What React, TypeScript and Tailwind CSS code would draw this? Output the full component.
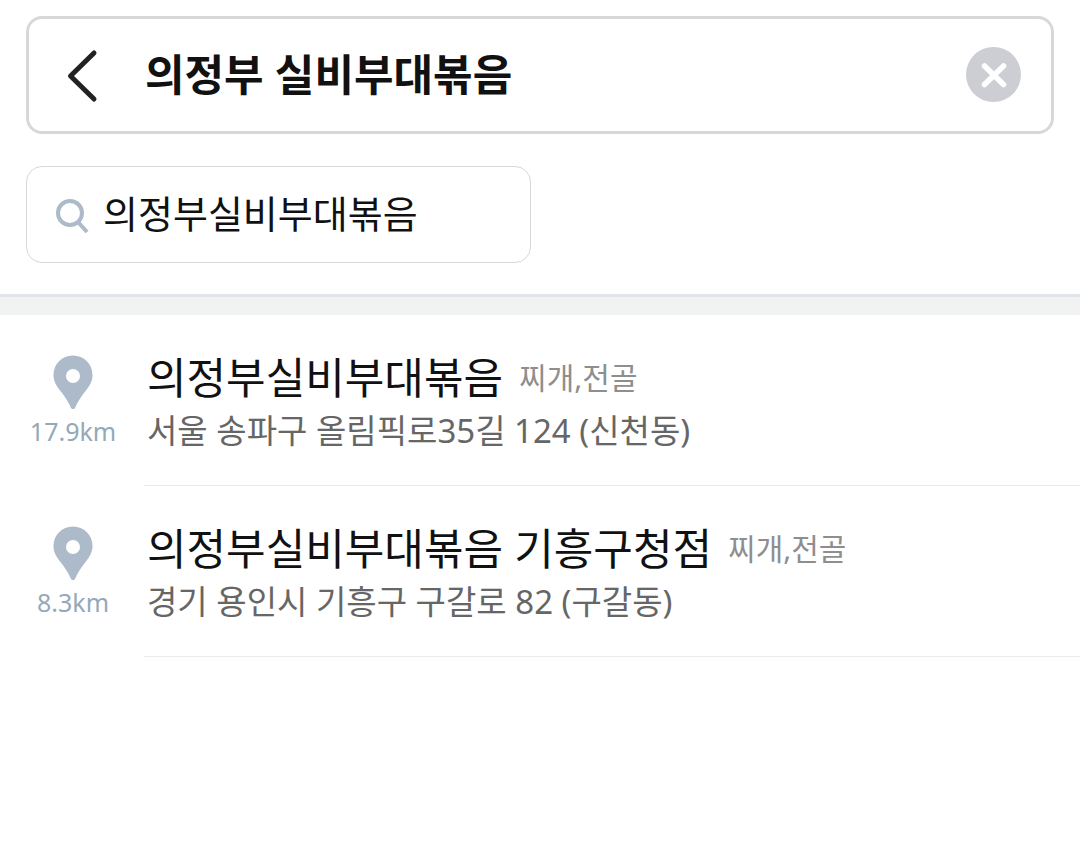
interface Place {
  name: string;
  category: string;
  address: string;
  distance: string;
}

const places: Place[] = [
  { name: "의정부실비부대볶음", category: "찌개,전골", address: "서울 송파구 올림픽로35길 124 (신천동)", distance: "17.9km" },
  { name: "의정부실비부대볶음 기흥구청점", category: "찌개,전골", address: "경기 용인시 기흥구 구갈로 82 (구갈동)", distance: "8.3km" },
];

function PinIcon() {
  return (
    <svg width="40" height="54" viewBox="0 0 40 54" aria-hidden="true">
      <path
        fill="#adbac9"
        fillRule="evenodd"
        d="M20 .5C9 .5 .5 9 .5 20c0 6.500 3 11 7 16 5 6.500 8 11 10.500 17q2 2.500 4 0c2.500-6 5.500-10.500 10.500-17 4-5 7-9.500 7-16C39.500 9 31 .5 20 .5Zm0 13.500a7 7 0 1 1 0 14a7 7 0 0 1 0-14Z"
      />
    </svg>
  );
}

function PlaceRow({ place }: { place: Place }) {
  return (
    <li className="flex">
      <div className="flex w-36 shrink-0 flex-col items-center pt-10 pl-0.5">
        <PinIcon />
        <span className="mt-1 text-[25px] leading-9 text-[#94a8b8]">{place.distance}</span>
      </div>
      <a href="#place" className="block min-w-0 flex-1 border-b border-[#ebebeb] pt-[37px] pb-[27px] pl-[3px]">
        <span className="flex items-center gap-4">
          <span className="text-[43px] leading-[52px] text-[#111]">{place.name}</span>
          <span className="text-[30px] leading-10 text-[#8e8e8e]">{place.category}</span>
        </span>
        <span className="block text-[33px] leading-[54px] text-[#666]">{place.address}</span>
      </a>
    </li>
  );
}

export default function App() {
  return (
    <main className="min-h-screen bg-white font-['Noto_Sans','Noto_Sans_CJK_KR',sans-serif]">
      <header className="px-[26px] pt-4 pb-[31px]">
        <form className="flex h-[118px] items-center rounded-2xl border-3 border-[#d8d8d8] pr-[30px] pb-px pl-9">
          <button type="button" aria-label="뒤로" className="shrink-0">
            <svg width="36" height="56" viewBox="0 0 36 56" fill="none" aria-hidden="true">
              <path d="M29 6 5.500 29 29 52" stroke="#222" strokeWidth="5" strokeLinecap="round" strokeLinejoin="round" />
            </svg>
          </button>
          <input
            aria-label="검색어"
            defaultValue="의정부 실비부대볶음"
            className="ml-11 min-w-0 flex-1 text-[43px] leading-[60px] font-bold text-[#111] outline-none"
          />
          <button type="button" aria-label="지우기" className="shrink-0">
            <svg width="55" height="55" viewBox="0 0 55 55" aria-hidden="true">
              <circle cx="27.500" cy="27.500" r="27.500" fill="#cdced3" />
              <path d="m18.500 19 19 18.500m0-18.500-19 18.500" stroke="#fff" strokeWidth="5.500" strokeLinecap="round" />
            </svg>
          </button>
        </form>
        <button type="button" className="mt-8 flex h-[97px] w-[505px] max-w-full items-center rounded-2xl border border-[#d8d8d8] pl-7">
          <svg width="36" height="36" viewBox="0 0 36 36" fill="none" stroke="#adbac9" strokeWidth="4" aria-hidden="true">
            <circle cx="15" cy="16" r="12" />
            <path d="m23 25 9 10" />
          </svg>
          <span className="ml-3 pb-1 text-[38px] leading-[52px] text-[#111]">의정부실비부대볶음</span>
        </button>
      </header>
      <div className="h-[21px] border-t-3 border-[#e2e4ec] bg-[#f1f3f3]" />
      <ul>
        {places.map((place) => (
          <PlaceRow key={place.address} place={place} />
        ))}
      </ul>
    </main>
  );
}
